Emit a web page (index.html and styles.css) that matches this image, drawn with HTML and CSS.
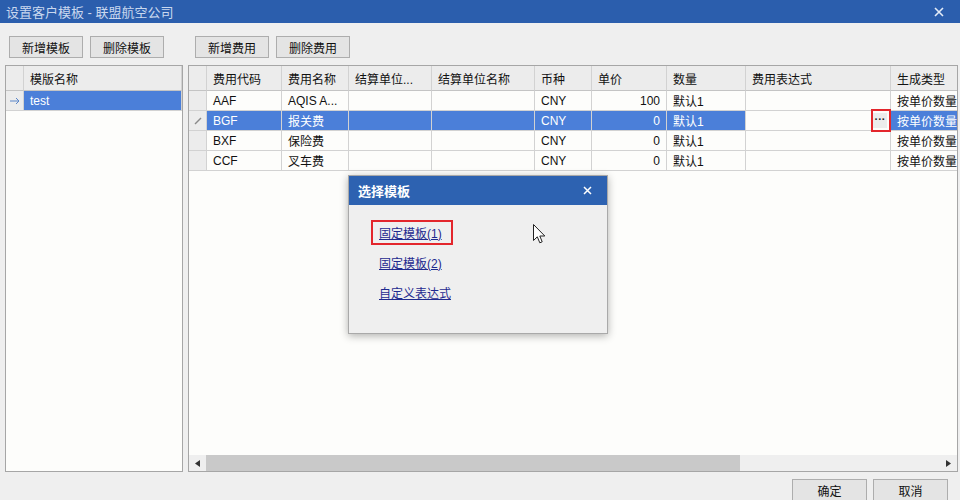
FILE: index.html
```html
<!DOCTYPE html>
<html lang="zh-CN">
<head>
  <meta charset="UTF-8" />
  <title>设置客户模板</title>
  <link rel="stylesheet" href="styles.css">
</head>
<body>

  <div class="titlebar">
    <span class="title">设置客户模板 - 联盟航空公司</span>
    <svg class="close" width="10" height="10" viewBox="0 0 10 10"><path d="M1 1L9 9M9 1L1 9" stroke="#e4ecf8" stroke-width="1.6"/></svg>
  </div>

  <div class="content">
    <!-- templates -->
    <div class="pane-left">
      <div class="toolbar">
        <button class="btn">新增模板</button>
        <button class="btn">删除模板</button>
      </div>
      <div class="grid">
        <table class="data">
          <colgroup><col style="width:18px"><col style="width:158px"></colgroup>
          <thead>
            <tr><th class="ind"></th><th>模版名称</th></tr>
          </thead>
          <tbody>
            <tr class="sel">
              <td class="ind"><svg width="10" height="8" viewBox="0 0 10 8"><path d="M0 4H9M6 1L9 4L6 7" fill="none" stroke="#5a86c9" stroke-width="1"/></svg></td>
              <td>test</td>
            </tr>
          </tbody>
        </table>
      </div>
    </div>

    <!-- fees -->
    <div class="pane-right">
      <div class="toolbar">
        <button class="btn">新增费用</button>
        <button class="btn">删除费用</button>
      </div>
      <div class="grid grid-fees">
        <div class="grid-body">
          <table class="data fees">
            <colgroup>
              <col style="width:18px"><col style="width:75px"><col style="width:67px"><col style="width:83px">
              <col style="width:103px"><col style="width:57px"><col style="width:75px"><col style="width:79px">
              <col style="width:145px"><col style="width:90px">
            </colgroup>
            <thead>
              <tr>
                <th class="ind"></th><th>费用代码</th><th>费用名称</th><th>结算单位...</th><th>结算单位名称</th>
                <th>币种</th><th>单价</th><th>数量</th><th>费用表达式</th><th>生成类型</th>
              </tr>
            </thead>
            <tbody>
              <tr>
                <td class="ind"></td><td>AAF</td><td>AQIS A...</td><td></td><td></td>
                <td>CNY</td><td class="num">100</td><td>默认1</td><td></td><td>按单价数量</td>
              </tr>
              <tr class="sel">
                <td class="ind"><svg width="8" height="8" viewBox="0 0 8 8"><path d="M1 7L7 1" stroke="#8a8a8a" stroke-width="1.4"/></svg></td>
                <td>BGF</td><td>报关费</td><td></td><td></td>
                <td>CNY</td><td class="num">0</td><td>默认1</td>
                <td class="edit"><span class="dots">···</span><span class="mark"></span></td>
                <td>按单价数量</td>
              </tr>
              <tr>
                <td class="ind"></td><td>BXF</td><td>保险费</td><td></td><td></td>
                <td>CNY</td><td class="num">0</td><td>默认1</td><td></td><td>按单价数量</td>
              </tr>
              <tr>
                <td class="ind"></td><td>CCF</td><td>叉车费</td><td></td><td></td>
                <td>CNY</td><td class="num">0</td><td>默认1</td><td></td><td>按单价数量</td>
              </tr>
            </tbody>
          </table>
        </div>
        <div class="hscroll">
          <span class="arrow"><svg width="5" height="7" viewBox="0 0 5 7"><path d="M5 0V7L0 3.5Z" fill="#333"/></svg></span>
          <span class="thumb"></span>
          <span class="track"></span>
          <span class="arrow"><svg width="5" height="7" viewBox="0 0 5 7"><path d="M0 0V7L5 3.5Z" fill="#333"/></svg></span>
        </div>
      </div>
    </div>
  </div>

  <div class="footer">
    <button class="btn">确定</button>
    <button class="btn">取消</button>
  </div>

  <!-- template picker -->
  <div class="dialog">
    <div class="dialog-title">
      <span>选择模板</span>
      <svg width="9" height="9" viewBox="0 0 9 9"><path d="M1 1L8 8M8 1L1 8" stroke="#fff" stroke-width="1.5"/></svg>
    </div>
    <div class="dialog-body">
      <div class="choice active"><span class="frame"><a href="#">固定模板(1)</a></span></div>
      <div class="choice"><a href="#">固定模板(2)</a></div>
      <div class="choice"><a href="#">自定义表达式</a></div>
    </div>
  </div>

  <svg class="cursor" width="13" height="20" viewBox="0 0 13 20">
    <path d="M0.5 0.5V16.5L4.3 12.8L6.8 18.8L9.2 17.8L6.8 12H11.8Z" fill="#fff" stroke="#222" stroke-width="1"/>
  </svg>

</body>
</html>
```

FILE: styles.css
```css
body {
  margin: 0;
  width: 960px;
  height: 500px;
  overflow: hidden;
  position: relative;
  background: #efefef;
  font-family: "Liberation Sans", "Noto Sans CJK SC", sans-serif;
  font-size: 12px;
  color: #111;
}

.titlebar {
  height: 23px;
  background: #2b5ead;
  display: flex;
  align-items: center;
  justify-content: space-between;
  padding: 0 16px 0 6px;
  color: #c9d8ef;
  font-size: 13px;
}

.content {
  display: flex;
  gap: 5px;
  padding: 13px 2px 0 5px;
}

.pane-left {
  width: 178px;
}

.pane-right {
  width: 770px;
}

.toolbar {
  display: flex;
  gap: 7px;
  height: 22px;
  margin-bottom: 7px;
}

.pane-left .toolbar {
  padding-left: 4px;
}

.pane-right .toolbar {
  padding-left: 7px;
}

.btn {
  width: 74px;
  height: 22px;
  padding: 0;
  border: 1px solid #adadad;
  background: #e4e4e4;
  font-family: inherit;
  font-size: 12px;
  color: #111;
}

.grid {
  height: 407px;
  box-sizing: border-box;
  border: 1px solid #a6a6a6;
  background: #fdfdfb;
  overflow: hidden;
}

.grid-fees {
  display: flex;
  flex-direction: column;
}

.grid-body {
  flex: 1;
  overflow: hidden;
}

.data {
  table-layout: fixed;
  border-collapse: separate;
  border-spacing: 0;
}

.fees {
  width: 792px;
}

.data th,
.data td {
  box-sizing: border-box;
  border-right: 1px solid #d2d2d2;
  border-bottom: 1px solid #d2d2d2;
  padding: 0 6px;
  white-space: nowrap;
  overflow: hidden;
  text-align: left;
}

.data th {
  height: 25px;
  background: #ececec;
  font-weight: normal;
  border-bottom-color: #c4c4c4;
}

.data td {
  height: 20px;
  background: #fdfdfb;
}

.data .ind {
  background: #ececec;
  padding: 0;
  text-align: center;
}

.data .ind svg {
  display: block;
  margin: 0 auto;
}

.data .num {
  text-align: right;
}

.data tr.sel td {
  background: #4b7fd9;
  color: #fff;
}

.data tr.sel td.ind {
  background: #ececec;
}

.data tr.sel td.edit {
  background: #fdfdfb;
  position: relative;
  overflow: visible;
}

.dots {
  position: absolute;
  right: 3px;
  top: 2px;
  width: 14px;
  height: 15px;
  background: #ececec;
  color: #222;
  font-size: 11px;
  font-weight: bold;
  line-height: 13px;
  text-align: center;
}

.mark {
  position: absolute;
  right: -1px;
  top: -2px;
  width: 20px;
  height: 23px;
  box-sizing: border-box;
  border: 2.5px solid #e3262c;
}

.hscroll {
  height: 16px;
  display: flex;
  background: #efefef;
}

.hscroll .arrow {
  width: 17px;
  display: flex;
  align-items: center;
  justify-content: center;
}

.hscroll .thumb {
  width: 534px;
  background: #c9c9c9;
}

.hscroll .track {
  flex: 1;
}

.footer {
  display: flex;
  justify-content: flex-end;
  gap: 6px;
  padding: 7px 12px 0 0;
}

.footer .btn {
  width: 75px;
}

.dialog {
  position: absolute;
  left: 348px;
  top: 175px;
  width: 260px;
  height: 159px;
  box-sizing: border-box;
  background: #efefef;
  border: 1px solid #a9a9a9;
  box-shadow: 0 2px 8px rgba(0, 0, 0, 0.3);
}

.dialog-title {
  height: 29px;
  background: #2d62b1;
  color: #fff;
  font-size: 13px;
  font-weight: bold;
  display: flex;
  align-items: center;
  justify-content: space-between;
  padding: 0 15px 0 9px;
}

.dialog-body {
  padding: 12px 0 0 30px;
}

.choice {
  height: 30px;
  display: flex;
  align-items: center;
}

.choice a {
  color: #1f2a8f;
  text-decoration: underline;
}

.choice .frame {
  border: 2.5px solid #e3262c;
  padding: 2px 9px 2px 6px;
  margin-left: -8px;
}

.cursor {
  position: absolute;
  left: 533px;
  top: 224px;
}
```
